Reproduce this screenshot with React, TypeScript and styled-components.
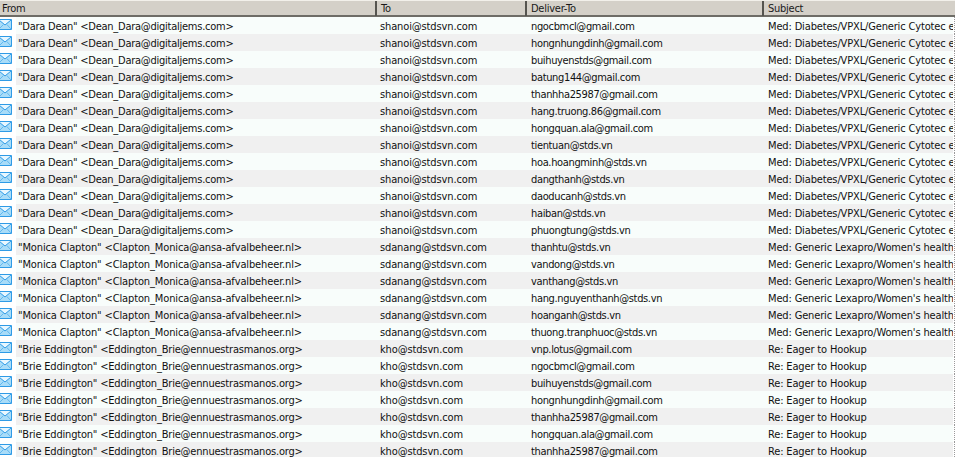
import React from 'react';
import styled, { createGlobalStyle } from 'styled-components';

const GlobalStyle = createGlobalStyle`
  html, body {
    margin: 0;
    padding: 0;
    height: 457px;
    overflow: hidden;
    background: #ffffff;
  }
  body {
    font-family: 'DejaVu Sans', 'Liberation Sans', sans-serif;
    font-stretch: condensed;
    font-size: 11px;
    letter-spacing: -0.25px;
    color: #111111;
  }
`;

type Message = { from: string; tracking: number; to: string; deliverTo: string; subject: string };

const DARA = '"Dara Dean" <Dean_Dara@digitaljems.com>';
const MONICA = '"Monica Clapton" <Clapton_Monica@ansa-afvalbeheer.nl>';
const BRIE = '"Brie Eddington" <Eddington_Brie@ennuestrasmanos.org>';
const CYTOTEC = 'Med: Diabetes/VPXL/Generic Cytotec e';
const LEXAPRO = "Med: Generic Lexapro/Women's health";
const HOOKUP = 'Re: Eager to Hookup';

const toMessages = (from: string, tracking: number, to: string, subject: string, list: string[]): Message[] =>
  list.map((deliverTo) => ({ from, tracking, to, deliverTo, subject }));

const messages: Message[] = [
  ...toMessages(DARA, -0.25, 'shanoi@stdsvn.com', CYTOTEC, [
    'ngocbmcl@gmail.com',
    'hongnhungdinh@gmail.com',
    'buihuyenstds@gmail.com',
    'batung144@gmail.com',
    'thanhha25987@gmail.com',
    'hang.truong.86@gmail.com',
    'hongquan.ala@gmail.com',
    'tientuan@stds.vn',
    'hoa.hoangminh@stds.vn',
    'dangthanh@stds.vn',
    'daoducanh@stds.vn',
    'haiban@stds.vn',
    'phuongtung@stds.vn',
  ]),
  ...toMessages(MONICA, -0.13, 'sdanang@stdsvn.com', LEXAPRO, [
    'thanhtu@stds.vn',
    'vandong@stds.vn',
    'vanthang@stds.vn',
    'hang.nguyenthanh@stds.vn',
    'hoanganh@stds.vn',
    'thuong.tranphuoc@stds.vn',
  ]),
  ...toMessages(BRIE, -0.19, 'kho@stdsvn.com', HOOKUP, [
    'vnp.lotus@gmail.com',
    'ngocbmcl@gmail.com',
    'buihuyenstds@gmail.com',
    'hongnhungdinh@gmail.com',
    'thanhha25987@gmail.com',
    'hongquan.ala@gmail.com',
    'thanhha25987@gmail.com',
  ]),
];

const List = styled.div`
  width: 955px;
  height: 457px;
  overflow: hidden;
`;

const Header = styled.div`
  display: grid;
  grid-template-columns: 375px 150px 237px 1fr;
  height: 17px;
  box-sizing: border-box;
  background: #d4d0c8;
  border-top: 1px solid #f2f0ea;
  border-bottom: 2px solid #6e6c66;
`;

const HeaderCell = styled.div`
  padding-left: 4px;
  line-height: 15px;
  color: #1a1a1a;
  border-left: 2px solid #55544f;
  &:first-child {
    border-left: 0;
    padding-left: 2px;
  }
`;

const Row = styled.div`
  display: grid;
  grid-template-columns: 16px 360px 151px 236px 190px;
  width: 955px;
  box-sizing: border-box;
  height: 17px;
  border-right: 1px dotted #9a9a9a;
`;

const IconCell = styled.div`
  background: #ffffff;
  overflow: hidden;
`;

const Cell = styled.div<{ $even: boolean }>`
  padding-left: 4px;
  line-height: 19px;
  white-space: pre;
  overflow: hidden;
  background: ${(p) => (p.$even ? '#f0f0f0' : '#f8fdfb')};
`;

const FromCell = styled(Cell)<{ $tracking: number }>`
  padding-left: 2px;
  letter-spacing: ${(p) => p.$tracking}px;
`;

const ToCell = styled(Cell)`
  letter-spacing: -0.13px;
`;

const DeliverCell = styled(Cell)`
  letter-spacing: -0.35px;
`;

const SubjectCell = styled(Cell)`
  padding-left: 5px;
  letter-spacing: -0.15px;
`;

const MailIcon = () => (
  <svg width="16" height="17" viewBox="0 0 16 17" style={{ display: 'block' }}>
    <path d="M-1 2.5H11.5V12.5H-1Z" fill="#a9dcf8" stroke="#2f9be6" />
    <path d="M-1 3L5 8L11 3" fill="#e8f7ff" stroke="#2f9be6" />
    <path d="M-1 12L3.5 7.5M11 12L6.8 7.5" fill="none" stroke="#63b8ee" />
  </svg>
);

export default function App() {
  return (
    <List>
      <GlobalStyle />
      <Header>
        <HeaderCell>From</HeaderCell>
        <HeaderCell>To</HeaderCell>
        <HeaderCell>Deliver-To</HeaderCell>
        <HeaderCell>Subject</HeaderCell>
      </Header>
      {messages.map((m, i) => (
        <Row key={i}>
          <IconCell>
            <MailIcon />
          </IconCell>
          <FromCell $even={i % 2 === 1} $tracking={m.tracking}>{m.from}</FromCell>
          <ToCell $even={i % 2 === 1}>{m.to}</ToCell>
          <DeliverCell $even={i % 2 === 1}>{m.deliverTo}</DeliverCell>
          <SubjectCell $even={i % 2 === 1}>{m.subject}</SubjectCell>
        </Row>
      ))}
    </List>
  );
}
